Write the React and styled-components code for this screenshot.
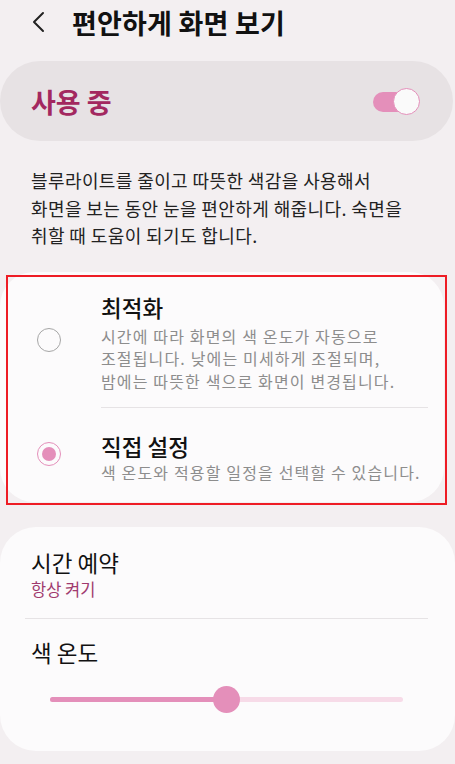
import React from "react";
import styled, { createGlobalStyle } from "styled-components";

const GlobalStyle = createGlobalStyle`
  body {
    margin: 0;
    background: #f3eff1;
    font-family: "Noto Sans CJK KR", "Noto Sans", sans-serif;
    color: #111;
  }
`;

const Page = styled.div`
  width: 455px;
  height: 764px;
  overflow: hidden;
`;

const Header = styled.div`
  height: 44px;
  display: flex;
  align-items: center;
  padding-left: 31px;
`;

const BackButton = styled.div`
  width: 16px;
  height: 22px;
  display: flex;
  margin-right: 25px;
`;

const Title = styled.h1`
  margin: 0;
  font-size: 27px;
  font-weight: 700;
  letter-spacing: 0.2px;
`;

const MasterCard = styled.div`
  margin: 17px 2px 0 0;
  height: 80px;
  border-radius: 40px;
  background: #e7e2e4;
  display: flex;
  align-items: center;
  justify-content: space-between;
  padding: 0 33px 0 31px;
`;

const MasterLabel = styled.span`
  font-size: 27px;
  font-weight: 700;
  color: #a3285f;
`;

const Toggle = styled.div`
  position: relative;
  width: 47px;
  height: 27px;
`;

const ToggleTrack = styled.div`
  position: absolute;
  left: 0;
  top: 4px;
  width: 40px;
  height: 20px;
  border-radius: 10px;
  background: #e48fba;
`;

const ToggleThumb = styled.div`
  position: absolute;
  right: 0;
  top: 0;
  width: 25px;
  height: 25px;
  border-radius: 50%;
  background: #fafafa;
  border: 1px solid #e48fba;
`;

const Description = styled.p`
  margin: 26px 20px 0 31px;
  font-size: 18px;
  letter-spacing: 0.4px;
  line-height: 27.5px;
  color: #222;
  white-space: nowrap;
`;

const OptionSection = styled.div`
  position: relative;
  margin-top: 22px;
`;

const Card = styled.div`
  background: #fcfbfc;
  border-radius: ${(p) => p.$radius || 34}px;
  margin-right: ${(p) => p.$right || 0}px;
  padding: ${(p) => p.$pad};
`;

const Highlight = styled.div`
  position: absolute;
  left: 6px;
  top: 3px;
  width: 437px;
  height: 226px;
  border: 2px solid #ee1c25;
  pointer-events: none;
`;

const OptionRow = styled.div`
  display: flex;
  align-items: center;
  padding: ${(p) => p.$pad};
`;

const RadioCol = styled.div`
  width: 101px;
  flex-shrink: 0;
  display: flex;
  padding-left: 37px;
  box-sizing: border-box;
  margin-bottom: ${(p) => p.$lift || 0}px;
`;

const Radio = styled.div`
  width: 22px;
  height: 22px;
  border-radius: 50%;
  border: 1.5px solid ${(p) => (p.$checked ? "#e48fba" : "#a6a6a6")};
  display: flex;
  align-items: center;
  justify-content: center;
  &::after {
    content: "";
    display: ${(p) => (p.$checked ? "block" : "none")};
    width: 14px;
    height: 14px;
    border-radius: 50%;
    background: #e48fba;
  }
`;

const OptionText = styled.div`
  flex: 1;
`;

const ItemTitle = styled.div`
  font-size: 22.5px;
  line-height: 28px;
  font-weight: ${(p) => p.$weight || 400};
  color: #111;
`;

const OptionDesc = styled.div`
  margin-top: ${(p) => p.$gap ?? 4}px;
  font-size: 16px;
  letter-spacing: 1.15px;
  line-height: 22.5px;
  color: #8d8d8d;
  white-space: nowrap;
`;

const Divider = styled.div`
  height: 1px;
  background: #e6e3e5;
  margin: ${(p) => p.$margin};
`;

const SubValue = styled.div`
  margin-top: 2px;
  font-size: 16.5px;
  line-height: 22px;
  color: #a03a6e;
`;

const SettingBlock = styled.div`
  padding: 0 31px;
`;

const SliderWrap = styled.div`
  position: relative;
  height: 30px;
  margin: 19px 52px 0 50px;
  display: flex;
  align-items: center;
`;

const SliderTrack = styled.div`
  width: 100%;
  height: 5px;
  border-radius: 3px;
  background: #f7dbe8;
  overflow: hidden;
`;

const SliderFill = styled.div`
  height: 100%;
  background: #e48fba;
`;

const SliderThumb = styled.div`
  position: absolute;
  top: 1px;
  width: 27px;
  height: 27px;
  margin-left: -13.5px;
  border-radius: 50%;
  background: #e48fba;
`;

const Slider = ({ value }) => (
  <SliderWrap>
    <SliderTrack>
      <SliderFill style={{ width: `${value * 100}%` }} />
    </SliderTrack>
    <SliderThumb style={{ left: `${value * 100}%` }} />
  </SliderWrap>
);

export default function App() {
  return (
    <Page>
      <GlobalStyle />
      <Header>
        <BackButton>
          <svg width="16" height="22" viewBox="0 0 16 22">
            <path d="M12 2 L3 11 L12 20" fill="none" stroke="#222" strokeWidth="2" strokeLinecap="round" strokeLinejoin="round" />
          </svg>
        </BackButton>
        <Title>편안하게 화면 보기</Title>
      </Header>

      <MasterCard>
        <MasterLabel>사용 중</MasterLabel>
        <Toggle>
          <ToggleTrack />
          <ToggleThumb />
        </Toggle>
      </MasterCard>

      <Description>
        블루라이트를 줄이고 따뜻한 색감을 사용해서
        <br />
        화면을 보는 동안 눈을 편안하게 해줍니다. 숙면을
        <br />
        취할 때 도움이 되기도 합니다.
      </Description>

      <OptionSection>
        <Card $right={11} $pad="21px 0 18px">
          <OptionRow $pad="0 0 15px">
            <RadioCol $lift={4}>
              <Radio />
            </RadioCol>
            <OptionText>
              <ItemTitle $weight={500}>최적화</ItemTitle>
              <OptionDesc>
                시간에 따라 화면의 색 온도가 자동으로
                <br />
                조절됩니다. 낮에는 미세하게 조절되며,
                <br />
                밤에는 따뜻한 색으로 화면이 변경됩니다.
              </OptionDesc>
            </OptionText>
          </OptionRow>
          <Divider $margin="0 16px 0 101px" />
          <OptionRow $pad="24px 0 0">
            <RadioCol $lift={8}>
              <Radio $checked />
            </RadioCol>
            <OptionText>
              <ItemTitle $weight={500}>직접 설정</ItemTitle>
              <OptionDesc $gap={1}>색 온도와 적용할 일정을 선택할 수 있습니다.</OptionDesc>
            </OptionText>
          </OptionRow>
        </Card>
        <Highlight />
      </OptionSection>

      <Card $radius={36} $pad="21px 0 36px" style={{ marginTop: 25 }}>
        <SettingBlock>
          <ItemTitle>시간 예약</ItemTitle>
          <SubValue>항상 켜기</SubValue>
        </SettingBlock>
        <Divider $margin="18px 27px 19px 25px" />
        <SettingBlock>
          <ItemTitle>색 온도</ItemTitle>
        </SettingBlock>
        <Slider value={0.5} />
      </Card>
    </Page>
  );
}
